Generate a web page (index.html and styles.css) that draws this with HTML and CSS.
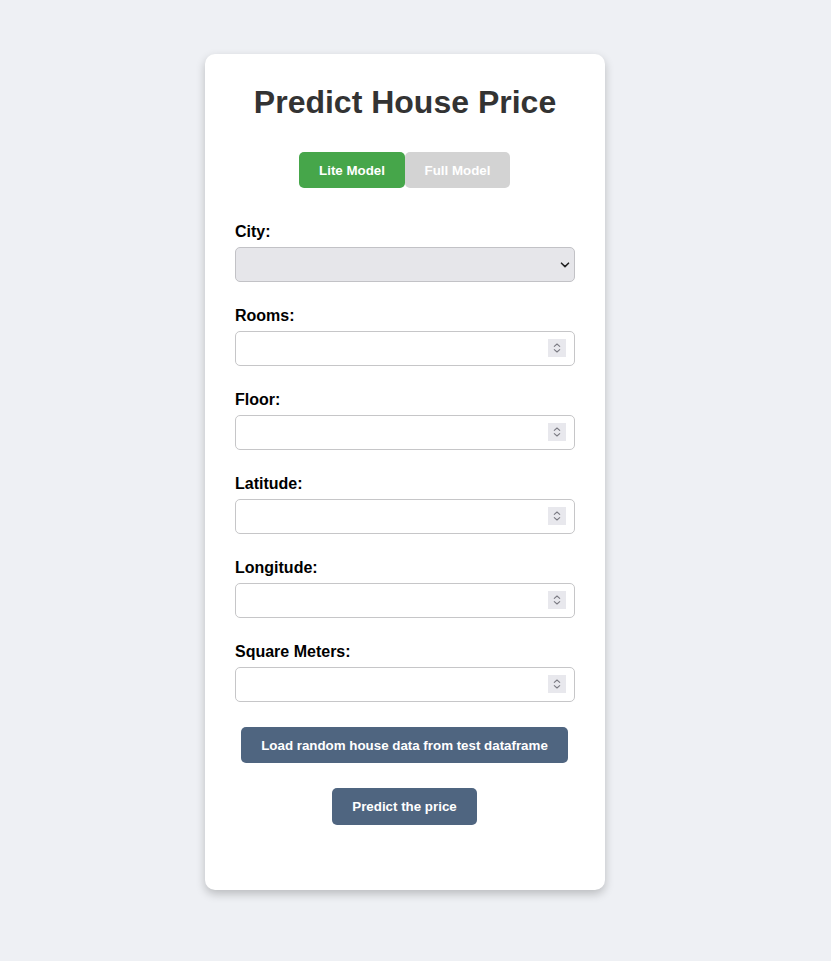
FILE: index.html
```html
<!DOCTYPE html>
<html>
<head>
<meta charset="utf-8">
<link rel="stylesheet" href="styles.css">
</head>
<body>
<div class="card">
  <h1 class="title">Predict House Price</h1>
  <div class="toggle">
    <button class="tbtn active">Lite Model</button>
    <button class="tbtn">Full Model</button>
  </div>
  <div class="group">
    <label class="lbl">City:</label>
    <div class="field">
      <select class="sel"></select>
      <svg class="chev" width="10" height="6" viewBox="0 0 10 6"><path d="M1.5 1.2 L5 4.6 L8.5 1.2" fill="none" stroke="#222" stroke-width="1.6" stroke-linecap="round" stroke-linejoin="round"/></svg>
    </div>
  </div>
  <div class="group">
    <label class="lbl">Rooms:</label>
    <div class="field"><input class="inp" type="text"><span class="spin"><svg width="18" height="18" viewBox="0 0 18 18"><path d="M6.3 7.3 L9 5 L11.7 7.3 M6.3 10.7 L9 13 L11.7 10.7" fill="none" stroke="#7a7a82" stroke-width="1.1" stroke-linecap="round" stroke-linejoin="round"/></svg></span></div>
  </div>
  <div class="group">
    <label class="lbl">Floor:</label>
    <div class="field"><input class="inp" type="text"><span class="spin"><svg width="18" height="18" viewBox="0 0 18 18"><path d="M6.3 7.3 L9 5 L11.7 7.3 M6.3 10.7 L9 13 L11.7 10.7" fill="none" stroke="#7a7a82" stroke-width="1.1" stroke-linecap="round" stroke-linejoin="round"/></svg></span></div>
  </div>
  <div class="group">
    <label class="lbl">Latitude:</label>
    <div class="field"><input class="inp" type="text"><span class="spin"><svg width="18" height="18" viewBox="0 0 18 18"><path d="M6.3 7.3 L9 5 L11.7 7.3 M6.3 10.7 L9 13 L11.7 10.7" fill="none" stroke="#7a7a82" stroke-width="1.1" stroke-linecap="round" stroke-linejoin="round"/></svg></span></div>
  </div>
  <div class="group">
    <label class="lbl">Longitude:</label>
    <div class="field"><input class="inp" type="text"><span class="spin"><svg width="18" height="18" viewBox="0 0 18 18"><path d="M6.3 7.3 L9 5 L11.7 7.3 M6.3 10.7 L9 13 L11.7 10.7" fill="none" stroke="#7a7a82" stroke-width="1.1" stroke-linecap="round" stroke-linejoin="round"/></svg></span></div>
  </div>
  <div class="group">
    <label class="lbl">Square Meters:</label>
    <div class="field"><input class="inp" type="text"><span class="spin"><svg width="18" height="18" viewBox="0 0 18 18"><path d="M6.3 7.3 L9 5 L11.7 7.3 M6.3 10.7 L9 13 L11.7 10.7" fill="none" stroke="#7a7a82" stroke-width="1.1" stroke-linecap="round" stroke-linejoin="round"/></svg></span></div>
  </div>
  <button class="act load">Load random house data from test dataframe</button>
  <button class="act predict">Predict the price</button>
</div>
</body>
</html>
```
FILE: styles.css
```css
html, body {
  margin: 0;
  padding: 0;
}
body {
  background: #eef0f4;
  font-family: "Liberation Sans", Arial, sans-serif;
  min-height: 961px;
}
.card {
  box-sizing: border-box;
  width: 400px;
  margin: 54px 0 0 205px;
  background: #fff;
  border-radius: 10px;
  box-shadow: 0 4px 10px rgba(0, 0, 0, 0.22);
  padding: 30px 30px 40px;
  display: flex;
  flex-direction: column;
}
.title {
  margin: 0 0 31px;
  font-size: 32px;
  line-height: 37px;
  font-weight: bold;
  color: #333;
  text-align: center;
}
.toggle {
  display: flex;
  justify-content: center;
  margin-bottom: 35px;
  margin-right: 1px;
}
.tbtn {
  height: 36px;
  padding: 0;
  border: none;
  border-radius: 5px;
  background: #d3d3d3;
  color: #fff;
  font-family: "Liberation Sans", Arial, sans-serif;
  font-size: 13.33px;
  font-weight: bold;
  width: 105px;
}
.tbtn.active {
  background: #46a64a;
  width: 106px;
}
.group {
  display: flex;
  flex-direction: column;
  margin-bottom: 25px;
}
.lbl {
  font-size: 16px;
  line-height: 18px;
  font-weight: bold;
  color: #000;
  margin-bottom: 6px;
}
.field {
  position: relative;
  height: 35px;
}
.sel, .inp {
  box-sizing: border-box;
  width: 340px;
  height: 35px;
  margin: 0;
  border: 1px solid #c6c6c8;
  border-radius: 5px;
  font-size: 16px;
  outline: none;
  display: block;
}
.sel {
  -webkit-appearance: none;
  appearance: none;
  background: #e6e6ea;
  border-color: #c2c2c6;
}
.inp {
  background: #fff;
  padding: 0 8px;
}
.chev {
  position: absolute;
  right: 5px;
  top: 15px;
}
.spin {
  position: absolute;
  right: 9px;
  top: 8px;
  width: 18px;
  height: 18px;
  background: #e8e8ed;
  display: block;
}
.spin svg {
  display: block;
}
.act {
  align-self: center;
  height: 36px;
  padding: 0;
  border: none;
  border-radius: 5px;
  background: #4f6580;
  color: #fff;
  font-family: "Liberation Sans", Arial, sans-serif;
  font-size: 13.33px;
  font-weight: bold;
  margin-right: 1px;
}
.load {
  width: 327px;
  margin-bottom: 25px;
}
.predict {
  width: 145px;
  height: 37px;
  margin-bottom: 25px;
}
```
